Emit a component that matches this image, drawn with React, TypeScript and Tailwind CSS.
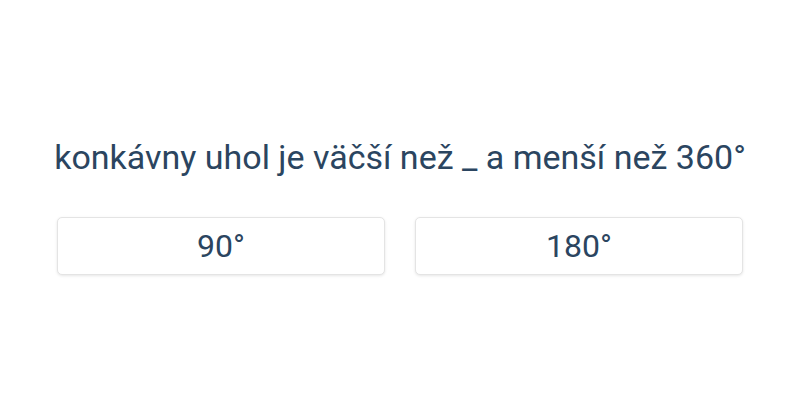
import React from "react";

const options = ["90°", "180°"];

const App = () => {
  return (
    <div className="w-[800px] h-[400px] bg-white flex flex-col items-center justify-center font-['Roboto',sans-serif] text-[#2b4560]">
      {/* Question */}
      <div className="text-[34px] leading-[40px] mt-[12px]">
        konkávny uhol je väčší než _ a menší než 360°
      </div>
      {/* Answers */}
      <div className="flex gap-[30px] mt-[40px]">
        {options.map((o) => (
          <button
            key={o}
            className="w-[328px] h-[58px] bg-white border border-[#e4e4e4] rounded-[5px] shadow-[0_1px_3px_rgba(0,0,0,0.1)] text-[32px] text-[#2b4560]"
          >
            {o}
          </button>
        ))}
      </div>
    </div>
  );
};

export default App;
